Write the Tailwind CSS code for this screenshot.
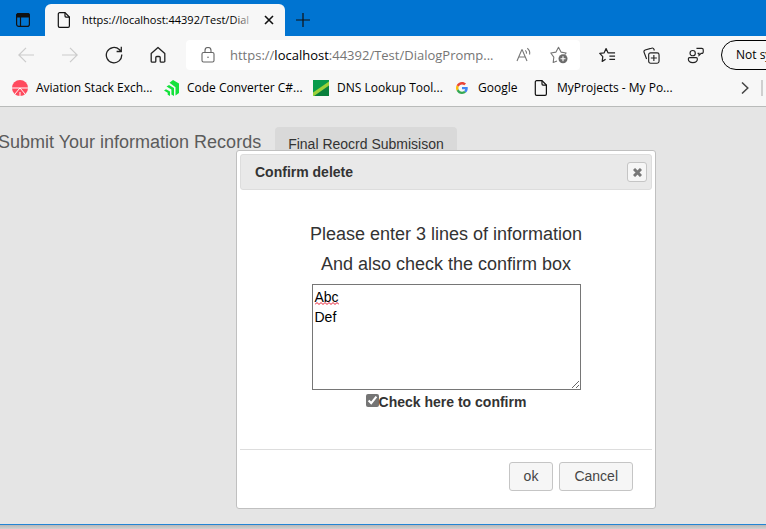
<!DOCTYPE html>
<html lang="en">
<head>
  <meta charset="UTF-8" />
  <meta name="viewport" content="width=device-width, initial-scale=1.0" />
  <title>Dialog Prompt</title>
  <script src="https://cdn.jsdelivr.net/npm/@tailwindcss/browser@4"></script>
</head>
<body class="h-screen flex flex-col overflow-hidden bg-[#e5e5e5] font-['Liberation_Sans',Arial,sans-serif]">

  <!-- Browser chrome -->
  <header class="shrink-0 bg-[#f7f7f7] border-b border-[#b9bbba] text-black font-['Open_Sans',sans-serif]">

    <!-- Tab strip -->
    <div class="h-9 flex items-end bg-[#0074d1]">
      <button type="button" aria-label="Tab actions" class="w-[45px] h-full flex items-center justify-center pt-1">
        <svg class="w-3.5 h-3.5" viewBox="1 1 14 14" fill="none" stroke="#111" stroke-width="1.2">
          <rect x="1.6" y="1.6" width="12.8" height="12.8" rx="2.2" />
          <path d="M1.6 5V3.5a2 2 0 0 1 2-2h8.800a2 2 0 0 1 2 2V5z" fill="#111" />
          <path d="M5.500 5v9.400" />
        </svg>
      </button>
      <div class="w-60 h-8 flex items-center rounded-t-md bg-[#f7f7f7] pl-3 pr-2">
        <svg class="w-3.5 h-4 shrink-0" viewBox="0 0 14 16" fill="none" stroke="#111" stroke-width="1.2">
          <path d="M2.600.7h5.400l4.400 4.400v8.900a1.300 1.300 0 0 1-1.300 1.300H2.600a1.300 1.300 0 0 1-1.300-1.300V2A1.300 1.300 0 0 1 2.600.7z" />
          <path d="M8 .7v3.400a1 1 0 0 0 1 1h3.400" />
        </svg>
        <div class="relative ml-[11px] flex-1 whitespace-nowrap text-[11px] leading-4">
          https://localhost:44392/Test/Dial
          <span class="absolute inset-y-0 right-0 w-6 bg-linear-to-r from-[#f7f7f7]/0 to-[#f7f7f7]"></span>
        </div>
        <button type="button" aria-label="Close tab" class="w-4 h-4 ml-1 flex items-center justify-center">
          <svg class="w-2.5 h-2.5" viewBox="0 0 10 10" stroke="#111" stroke-width="1.600"><path d="M1 1l8 8M9 1L1 9" /></svg>
        </button>
      </div>
      <button type="button" aria-label="New tab" class="w-9 h-8 flex items-center justify-center">
        <svg class="w-3.5 h-3.5" viewBox="0 0 14 14" stroke="#111" stroke-width="1.2"><path d="M7 0v14M0 7h14" /></svg>
      </button>
    </div>

    <!-- Toolbar -->
    <div class="h-[38px] flex items-center overflow-hidden">
      <button type="button" aria-label="Back" class="w-[30px] ml-[11px] flex justify-center shrink-0">
        <svg class="w-4 h-4" viewBox="0 0 16 16" fill="none" stroke="#cbcbcb" stroke-width="1.2"><path d="M16 8H.8M8 .8L.8 8 8 15.200" /></svg>
      </button>
      <button type="button" aria-label="Forward" class="w-[30px] ml-3.5 flex justify-center shrink-0">
        <svg class="w-4 h-4" viewBox="0 0 16 16" fill="none" stroke="#cbcbcb" stroke-width="1.2"><path d="M0 8h15.200M8 .8L15.200 8 8 15.200" /></svg>
      </button>
      <button type="button" aria-label="Refresh" class="w-[30px] ml-3.5 flex justify-center shrink-0">
        <svg class="w-[18px] h-[18px]" viewBox="0 0 18 18" fill="none" stroke="#222" stroke-width="1.300"><path d="M16.700 8.500A7.700 7.700 0 1 1 14.300 3.500l1.700 1.700M16.300.8v4.700h-4.700" /></svg>
      </button>
      <button type="button" aria-label="Home" class="w-[30px] ml-3.5 flex justify-center shrink-0">
        <svg class="w-4 h-[18px]" viewBox="0 0 16 18" fill="none" stroke="#222" stroke-width="1.300" stroke-linejoin="round"><path d="M8 1.500l6.800 6v7.700a1 1 0 0 1-1 1h-2.600a1 1 0 0 1-1-1v-3.700a1 1 0 0 0-1-1H6.800a1 1 0 0 0-1 1v3.700a1 1 0 0 1-1 1H2.200a1 1 0 0 1-1-1V7.500z" /></svg>
      </button>

      <div class="flex-1 min-w-0 h-[30px] ml-[13px] flex items-center rounded bg-white pl-[15px] pr-3">
        <svg class="w-3.5 h-4 shrink-0" viewBox="0 0 14 16" fill="none" stroke="#666" stroke-width="1.1">
          <rect x="1" y="5.500" width="12" height="9.500" rx="1.500" /><path d="M4 5.500V3.500a3 3 0 0 1 6 0v2" /><circle cx="7" cy="10.300" r=".8" fill="#666" stroke="none" />
        </svg>
        <div class="ml-[15px] flex-1 whitespace-nowrap text-[13px] leading-5 text-[#767676]">https://<span class="text-black">localhost</span>:44392/Test/DialogPromp...</div>
        <button type="button" aria-label="Read aloud" class="shrink-0">
          <svg class="w-4 h-4" viewBox="0 0 16 16" fill="none" stroke="#777" stroke-width="1.1"><path d="M1 14L5.800 2.800h.4L11 14M2.800 10h6.400M9.300 3.300c.9.8 1.400 2 1.200 3.300M11.300 1.300c1.900 1.500 2.800 3.700 2.300 6.200" /></svg>
        </button>
        <button type="button" aria-label="Add to favorites" class="ml-[18px] shrink-0">
          <svg class="w-[18px] h-[18px]" viewBox="0 0 18 18" fill="none" stroke="#777" stroke-width="1.1" stroke-linejoin="round">
            <path d="M7 15l-3.800 1.500.6-5.400L.8 7l5.200-.9L8.500 1.300l2.500 4.800 5.200.9-1.500 1.700" />
            <circle cx="13" cy="12.700" r="4.500" fill="#6b6b6b" stroke="none" /><path d="M13 10.200v5M10.500 12.700h5" stroke="#fff" />
          </svg>
        </button>
      </div>

      <button type="button" aria-label="Favorites" class="ml-[19px] shrink-0">
        <svg class="w-[17px] h-[17px]" viewBox="0 0 18 18" fill="none" stroke="#222" stroke-width="1.300" stroke-linejoin="round">
          <path d="M7 13l-3.600 2.200.6-5L.8 6.800l4.700-.6L7.500 1.700l2 4.500h7.500M11 9.700h6M11 13.200h6" />
        </svg>
      </button>
      <button type="button" aria-label="Collections" class="ml-[27px] shrink-0">
        <svg class="w-[17px] h-[17px]" viewBox="0 0 18 18" fill="none" stroke="#222" stroke-width="1.2">
          <rect x="6" y="6.200" width="11" height="11" rx="2" /><path d="M11.500 8.500v6.400M8.300 11.700h6.400M3.800 12.700L1.200 5.800a2 2 0 0 1 1.100-2.600l6.800-2a2 2 0 0 1 2.500 1.200l.4 1.300" />
        </svg>
      </button>
      <button type="button" aria-label="Feedback" class="ml-[27px] shrink-0">
        <svg class="w-[17px] h-[17px]" viewBox="0 0 18 18" fill="none" stroke="#222" stroke-width="1.2">
          <circle cx="6" cy="6.500" r="2.800" /><path d="M2.700 11.300h7a1.500 1.500 0 0 1 1.300 1.500c0 2.500-2 3.800-4.800 3.800s-4.800-1.300-4.800-3.800a1.500 1.500 0 0 1 1.300-1.500zM10 1.500h5.700a1.500 1.500 0 0 1 1.500 1.500v2.300a1.500 1.500 0 0 1-1.500 1.500h-.7l-2.300 2.200V6.800h-1.500" />
        </svg>
      </button>
      <button type="button" class="ml-[17px] -mr-6 h-[30px] w-[69px] pl-3.5 shrink-0 rounded-full border border-black text-left text-[12px] whitespace-nowrap overflow-hidden">Not syncing</button>
    </div>

    <!-- Bookmarks bar -->
    <nav class="h-8 flex items-center pl-3 pb-1 text-[12px] leading-4 whitespace-nowrap overflow-hidden">
      <a href="#" class="flex items-center w-[152px] shrink-0">
        <svg class="w-4 h-4 mr-2" viewBox="0 0 16 16"><circle cx="8" cy="8" r="8" fill="#ff4a5e" /><path d="M0 8h16M8 8L2.500 14.500M8 8l5.500 6.500M8 12v4" stroke="#fff" /></svg>
        Aviation Stack Exch...
      </a>
      <a href="#" class="flex items-center w-[149px] shrink-0">
        <svg class="w-4 h-4 mr-[7px]" viewBox="0 0 16 16" fill="#14e23b"><path d="M5.500 2.700L9 0l6 3.500v9.500l-3.500 2.500V7.200z" /><path d="M2.500 6.500L5 5l5 3v8l-2.600-1.600V9.600z" /><path d="M0 10.500l2-1.200 4 2.300V16l-2.300-1.300v-2z" /></svg>
        Code Converter C#...
      </a>
      <a href="#" class="flex items-center w-[143px] shrink-0">
        <svg class="w-4 h-4 mr-2" viewBox="0 0 16 16"><path d="M0 0h16v16H0z" fill="#079a4b" /><path d="M0 13L16 2v14H0z" fill="#087f3c" /><path d="M0 12.500L16 1.500v4L1 16H0z" fill="#9bd13a" /></svg>
        DNS Lookup Tool...
      </a>
      <a href="#" class="flex items-center w-[78px] shrink-0">
        <svg class="w-3 h-3 mr-2.5" viewBox="0 0 48 48">
          <path fill="#ea4335" d="M24 9.500c3.500 0 6.700 1.200 9.200 3.600l6.900-6.900C35.900 2.400 30.500 0 24 0 14.600 0 6.500 5.400 2.600 13.200l8 6.200C12.400 13.700 17.700 9.500 24 9.500z" />
          <path fill="#4285f4" d="M47 24.500c0-1.600-.2-3.100-.4-4.500H24v9h12.900c-.6 3-2.300 5.500-4.800 7.200l7.700 6C44.400 38 47 31.800 47 24.500z" />
          <path fill="#fbbc05" d="M10.500 28.600c-.5-1.500-.8-3-.8-4.600s.3-3.100.8-4.600l-8-6.200C.9 16.500 0 20.100 0 24s.9 7.500 2.600 10.800z" />
          <path fill="#34a853" d="M24 48c6.500 0 11.900-2.100 15.900-5.800l-7.700-6c-2.200 1.500-4.900 2.300-8.200 2.300-6.300 0-11.600-4.200-13.500-9.900l-8 6.200C6.500 42.600 14.600 48 24 48z" />
        </svg>
        Google
      </a>
      <a href="#" class="flex items-center shrink-0">
        <svg class="w-3.5 h-4 mr-[9px]" viewBox="0 0 14 16" fill="none" stroke="#111" stroke-width="1.2">
          <path d="M2.600.7h5.400l4.400 4.400v8.900a1.300 1.300 0 0 1-1.300 1.300H2.600a1.300 1.300 0 0 1-1.300-1.300V2A1.300 1.300 0 0 1 2.600.7z" />
          <path d="M8 .7v3.400a1 1 0 0 0 1 1h3.400" />
        </svg>
        MyProjects - My Po...
      </a>
      <button type="button" aria-label="More favorites" class="ml-auto shrink-0">
        <svg class="w-2 h-3" viewBox="0 0 8 12" fill="none" stroke="#444" stroke-width="1.500"><path d="M1 .5L6.800 6 1 11.500" /></svg>
      </button>
      <span class="ml-3 mr-[3px] w-0.5 h-4 shrink-0 bg-[#cfcfcf]"></span>
    </nav>
  </header>

  <!-- Page -->
  <main class="relative flex-1 min-h-0 border-b border-[#2384d4]">
    <div class="flex items-start gap-3.5 pt-5">
      <h1 class="-ml-0.5 pt-[3px] text-[18px] leading-6 text-[#5b5b5b]">Submit Your information Records</h1>
      <button type="button" class="h-[34px] px-[13px] rounded bg-[#d9d9d9] text-[14px] text-[#333]">Final Reocrd Submisison</button>
    </div>

    <!-- Confirm dialog -->
    <section role="dialog" aria-labelledby="dialogTitle" class="absolute left-[236px] top-[43px] w-[420px] p-[3px] bg-white border border-[#c0c0c0] rounded-[3px] text-[#333]">
      <div class="h-9 flex items-center justify-between pl-3.5 pr-1 rounded-[3px] border border-[#dddddd] bg-[#e9e9e9]">
        <h2 id="dialogTitle" class="text-[14px] leading-5 font-bold">Confirm delete</h2>
        <button type="button" aria-label="Close" class="w-5 h-5 flex items-center justify-center rounded-[3px] border border-[#c5c5c5] bg-[#f6f6f6]">
          <svg class="w-[9px] h-[9px]" viewBox="0 0 9 9" stroke="#777" stroke-width="3"><path d="M1 1l7 7M8 1L1 8" /></svg>
        </button>
      </div>

      <form id="confirmForm">
        <div class="flex flex-col items-center pt-[29px] pb-[37px]">
          <p class="text-[18px] leading-[30px]">Please enter 3 lines of information</p>
          <p class="text-[18px] leading-[30px]">And also check the confirm box</p>
          <div class="relative mt-[5px]">
            <textarea aria-label="Information" spellcheck="false" class="block w-[269px] h-[106px] p-0.5 border border-[#767676] bg-white text-[14px] leading-5 text-black resize">Abc
Def</textarea>
            <!-- Spelling mark under the first word -->
            <svg class="absolute left-[3px] top-[18px] w-6 h-[3px] pointer-events-none" viewBox="0 0 24 3" fill="none" stroke="#e5152b"><path d="M0 2.500l2-2 2 2 2-2 2 2 2-2 2 2 2-2 2 2 2-2 2 2 2-2 2 2" /></svg>
          </div>
          <label class="flex items-center mt-0.5 text-[14px] leading-5 font-bold">
            <input id="confirmBox" type="checkbox" checked class="w-[13px] h-[13px] mb-1 accent-[#757575]">Check here to confirm
          </label>
        </div>
        <div class="flex justify-end gap-1.5 pt-3 pb-3.5 pr-[19px] border-t border-[#dddddd]">
          <button type="submit" class="h-[29px] px-3.5 rounded-[3px] border border-[#c5c5c5] bg-[#f6f6f6] text-[14px] text-[#454545]">ok</button>
          <button type="button" class="h-[29px] px-3.5 rounded-[3px] border border-[#c5c5c5] bg-[#f6f6f6] text-[14px] text-[#454545]">Cancel</button>
        </div>
      </form>
    </section>
  </main>
  <div class="h-1 shrink-0 bg-linear-to-b from-[#b8b8b8] to-[#d2d2d2]"></div>

  <script>
    document.getElementById("confirmForm").addEventListener("submit", function (e) {
      e.preventDefault();
      if (!document.getElementById("confirmBox").checked) {
        alert("Please check the confirm box.");
      }
    });
  </script>
</body>
</html>
